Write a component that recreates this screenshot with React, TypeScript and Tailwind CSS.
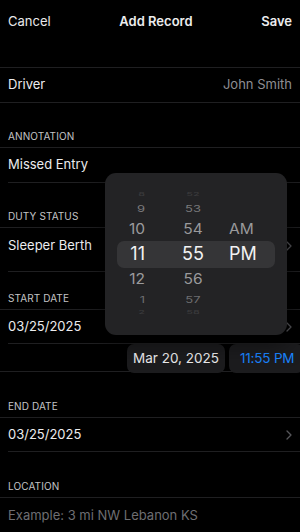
import React from 'react';

type WheelRow = { h: string; m: string; ap?: string; y: number; size: number; sy: number; color: string };

const wheelRows: WheelRow[] = [
    { h: '8', m: '52', y: 21, size: 11, sy: 0.45, color: '#3c3c3e' },
    { h: '9', m: '53', y: 36, size: 13, sy: 0.72, color: '#7a7a7c' },
    { h: '10', m: '54', ap: 'AM', y: 56, size: 15.5, sy: 0.9, color: '#9a9a9c' },
    { h: '11', m: '55', ap: 'PM', y: 81, size: 18, sy: 1, color: '#f2f2f2' },
    { h: '12', m: '56', y: 106, size: 15.5, sy: 0.9, color: '#9a9a9c' },
    { h: '1', m: '57', y: 127, size: 13, sy: 0.72, color: '#6e6e70' },
    { h: '2', m: '58', y: 139, size: 11, sy: 0.45, color: '#3c3c3e' },
];

function Line({ inset }: { inset?: boolean }) {
    return <div className={`h-px bg-[#1f1f21] ${inset ? 'ml-2' : ''}`} />;
}

function Chevron() {
    return (
        <svg width="6" height="10" viewBox="0 0 6 10" fill="none">
            <path d="M1 1l4 4-4 4" stroke="#56565a" strokeWidth="1.3" strokeLinecap="round" strokeLinejoin="round" />
        </svg>
    );
}

function Header({ label, className = 'h-[44px]' }: { label: string; className?: string }) {
    return (
        <div className={`${className} flex items-end px-2 pb-[5px]`}>
            <span className="text-[10px] leading-[12px] text-[#c4c4c6] tracking-[0.1px]">{label}</span>
        </div>
    );
}

function Row({ children, className = 'h-[34px]' }: { children: React.ReactNode; className?: string }) {
    return <div className={`${className} flex items-center justify-between pl-2 pr-[8px] text-[13px]`}>{children}</div>;
}

function TimeWheel() {
    return (
        <div className="absolute left-[105px] top-[173px] w-[182px] h-[162px] rounded-[11px] bg-[#232325] shadow-[0_6px_24px_rgba(0,0,0,0.6)] overflow-hidden">
            <div className="absolute left-[12px] top-[68px] w-[158px] h-[27px] rounded-[7px] bg-[#353537]" />
            {wheelRows.map((r) => (
                <React.Fragment key={r.h}>
                    <div
                        className="absolute left-0 w-[40px] text-right leading-none"
                        style={{ top: r.y, fontSize: r.size, color: r.color, transform: `translateY(-50%) scaleY(${r.sy})` }}
                    >
                        {r.h}
                    </div>
                    <div
                        className="absolute left-[68px] w-[40px] text-center leading-none"
                        style={{ top: r.y, fontSize: r.size, color: r.color, transform: `translateY(-50%) scaleY(${r.sy})` }}
                    >
                        {r.m}
                    </div>
                    {r.ap && (
                        <div
                            className="absolute left-[124px] leading-none"
                            style={{ top: r.y, fontSize: r.size, color: r.color, transform: `translateY(-50%) scaleY(${r.sy})` }}
                        >
                            {r.ap}
                        </div>
                    )}
                </React.Fragment>
            ))}
        </div>
    );
}

export default function App() {
    return (
        <div className="relative w-[300px] h-[532px] overflow-hidden bg-black text-[#ececee] font-['Inter',sans-serif]">
            {/* nav bar */}
            <div className="h-[44px] flex items-center justify-between px-2 text-[13px]">
                <span className="text-[#e8e8ea]">Cancel</span>
                <span className="font-semibold">Add Record</span>
                <span className="font-semibold">Save</span>
            </div>
            <div className="h-[23px]" />

            <Line />
            <Row>
                <span>Driver</span>
                <span className="text-[#8e8e93]">John Smith</span>
            </Row>
            <Line />

            <Header label="ANNOTATION" />
            <Line />
            <Row>
                <span>Missed Entry</span>
            </Row>
            <Line inset />

            <Header label="DUTY STATUS" />
            <Line />
            <Row className="h-[43px] pb-[7px]">
                <span>Sleeper Berth</span>
                <Chevron />
            </Row>
            <Line inset />

            <Header label="START DATE" className="h-[37px]" />
            <Line />
            <Row className="h-[33px]">
                <span>03/25/2025</span>
                <Chevron />
            </Row>
            <Line inset />
            <div className="h-[27px] flex items-start justify-end gap-[4px] -mr-[4px]">
                <div className="h-[29px] w-[98px] rounded-[7px] bg-[#1c1c1e] flex items-center justify-center text-[13.5px] text-[#ececee]">
                    Mar 20, 2025
                </div>
                <div className="h-[29px] w-[75px] rounded-[7px] bg-[#1c1c1e] flex items-center pl-[11px] text-[13.5px] text-[#1a84ff] tracking-[-0.2px]">
                    11:55 PM
                </div>
            </div>
            <Line />

            <Header label="END DATE" className="h-[45px]" />
            <Line />
            <Row className="h-[33px]">
                <span>03/25/2025</span>
                <Chevron />
            </Row>
            <Line inset />

            <Header label="LOCATION" className="h-[45px]" />
            <Line />
            <Row className="h-[36px]">
                <span className="text-[#6e6e72]">Example: 3 mi NW Lebanon KS</span>
            </Row>

            <TimeWheel />
        </div>
    );
}
